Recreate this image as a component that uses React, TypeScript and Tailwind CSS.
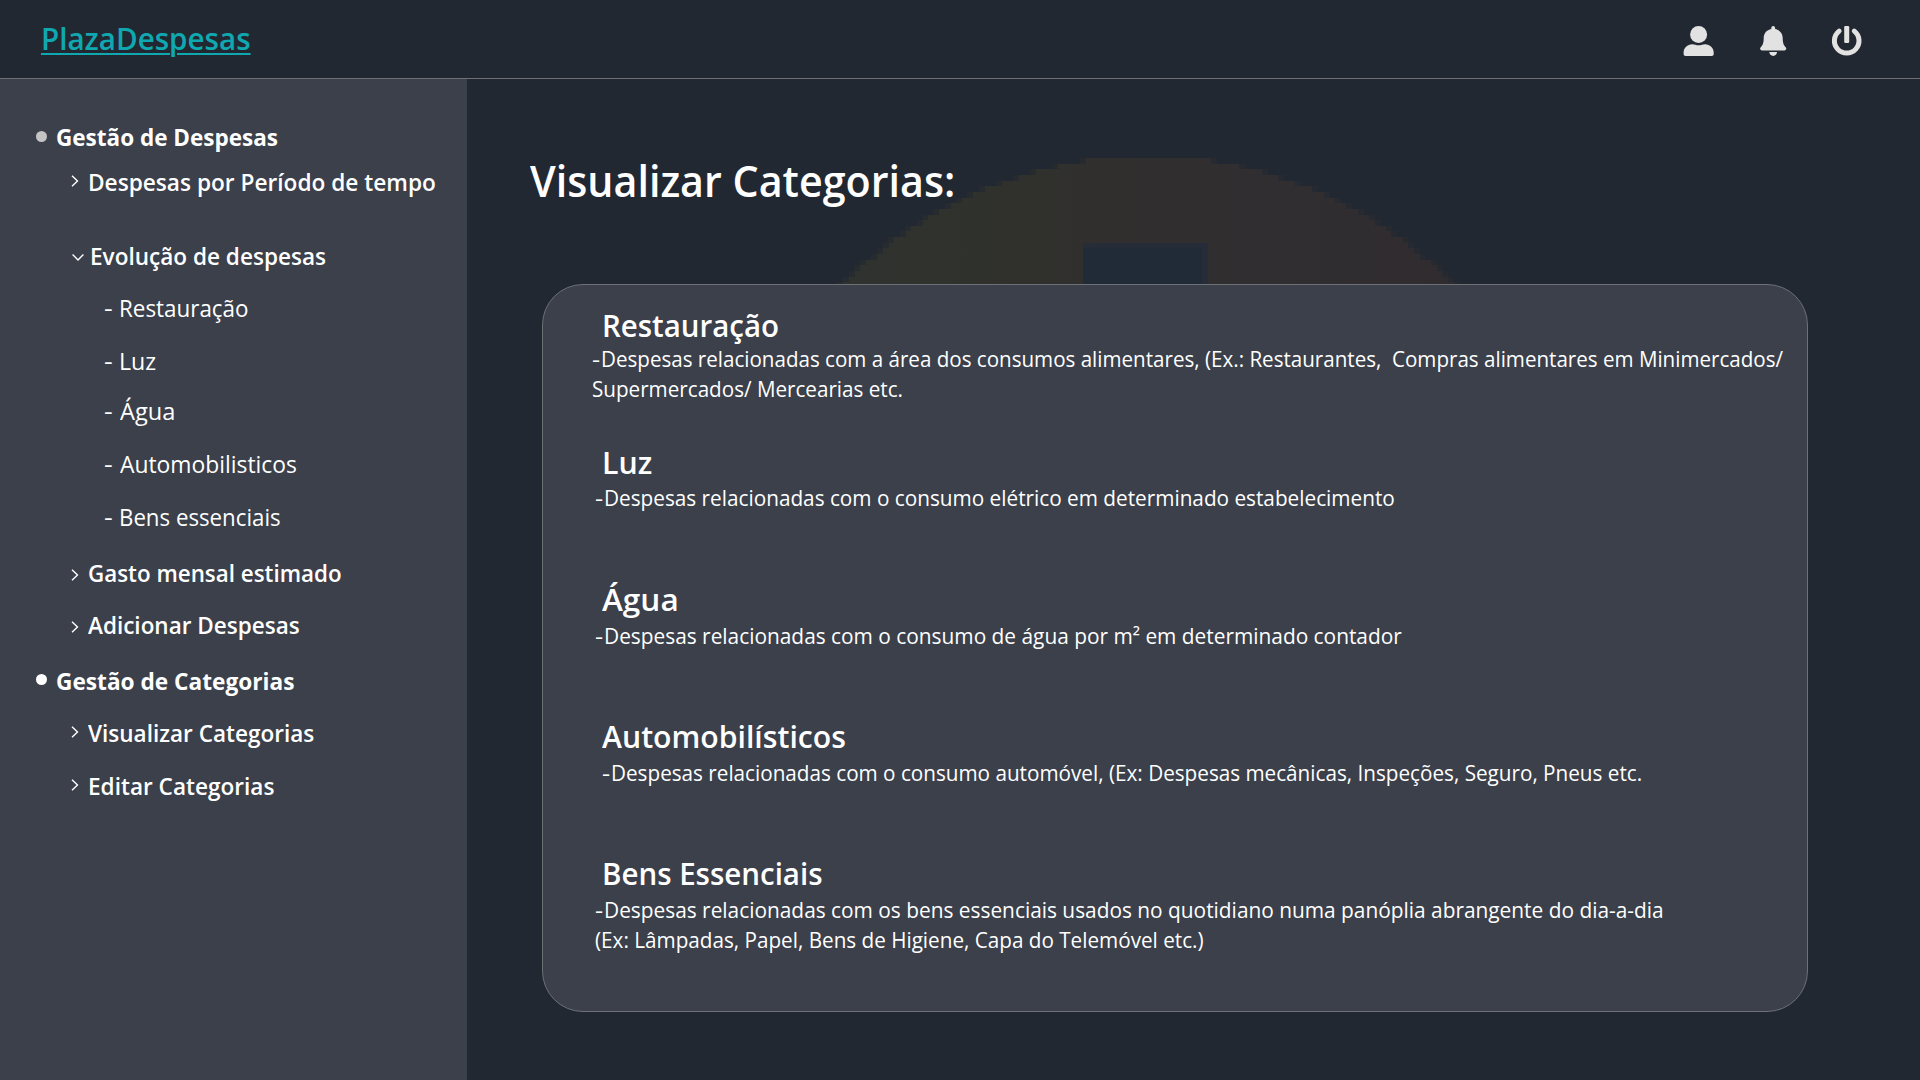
import type { ReactNode } from "react";

const CELL = 5.65;

function Backdrop() {
  const rows = [];
  for (let i = 0; i * CELL < 126; i++) {
    const y = i * CELL;
    const depth = y + 2 + CELL / 2;
    const half = Math.sqrt(2 * 428 * depth - depth * depth);
    const snapped = Math.floor(half / CELL) * CELL;
    rows.push({ y, half: snapped, h: Math.min(CELL, 126 - y) });
  }
  return (
    <svg
      className="absolute left-[362px] top-[79px] h-[126px] w-[640px]"
      viewBox="0 0 640 126"
      aria-hidden="true"
    >
      <defs>
        <linearGradient id="dome" gradientUnits="userSpaceOnUse" x1="10" y1="0" x2="630" y2="0">
          <stop offset="0" stopColor="#2f322e" />
          <stop offset="0.28" stopColor="#30312d" />
          <stop offset="0.42" stopColor="#302f2e" />
          <stop offset="0.72" stopColor="#302e30" />
          <stop offset="1" stopColor="#302b2f" />
        </linearGradient>
      </defs>
      <g shapeRendering="crispEdges">
        {rows.map((r) => (
          <g key={r.y} fill="url(#dome)">
            <rect x={319.5 - r.half} y={r.y} width={r.half * 2} height={r.h + 0.4} />
            <rect x={319.5 - r.half - 6} y={r.y} width={6} height={r.h + 0.4} opacity={0.35} />
            <rect x={319.5 + r.half} y={r.y} width={6} height={r.h + 0.4} opacity={0.35} />
          </g>
        ))}
        <rect x={254} y={85} width={125} height={41} fill="#262c38" />
        <rect x={254} y={90} width={119} height={36} fill="#212b37" />
      </g>
    </svg>
  );
}

function ChevronRight({ className }: { className: string }) {
  return (
    <svg className={`h-3 w-2 shrink-0 ${className}`} viewBox="0 0 8 12" fill="none" stroke="#fff" strokeWidth="1.4">
      <path d="M1 0.7 L6.5 6 L1 11.3" />
    </svg>
  );
}

function ChevronDown({ className }: { className: string }) {
  return (
    <svg className={`h-[7px] w-3 shrink-0 ${className}`} viewBox="0 0 12 7" fill="none" stroke="#fff" strokeWidth="1.4">
      <path d="M0.6 0.6 L6 6 L11.4 0.6" />
    </svg>
  );
}

type RowProps = { row: string; text: string; icon?: ReactNode; children: string };

function Row({ row, text, icon, children }: RowProps) {
  return (
    <li className={`flex h-8 items-center text-[23.5px] leading-8 ${row}`}>
      {icon}
      <span className={`origin-left ${text}`}>{children}</span>
    </li>
  );
}

function SubRow({ row, text, children }: RowProps) {
  return (
    <li className={`flex h-8 items-center pl-[103.5px] text-[23.5px] leading-8 ${row}`}>
      <span className="w-[15px] origin-left scale-x-[1.15]">-</span>
      <span className={`origin-left ${text}`}>{children}</span>
    </li>
  );
}

function Sidebar() {
  return (
    <aside className="w-[467px] shrink-0 bg-[#3b404b] pt-[42px]">
      <ul>
        <Row
          row="pl-[35.5px] font-bold"
          text="ml-[9px] scale-x-[0.958]"
          icon={<span className="-mt-[2px] size-[11px] rounded-full bg-[#c4c4c4]" />}
        >
          Gestão de Despesas
        </Row>
        <Row row="mt-[13px] pl-[71px] font-semibold" text="ml-[8.5px] scale-x-[0.964]" icon={<ChevronRight className="-mt-[2px]" />}>
          Despesas por Período de tempo
        </Row>
        <Row row="mt-[42px] pl-[71.5px] font-semibold" text="ml-[6.5px] scale-x-[0.96]" icon={<ChevronDown className="mt-[3px]" />}>
          Evolução de despesas
        </Row>
        <SubRow row="mt-5" text="ml-[0.5px] scale-x-[0.953]">Restauração</SubRow>
        <SubRow row="mt-[21px]" text="ml-[0.5px] scale-x-[0.985]">Luz</SubRow>
        <SubRow row="mt-[18px]" text="ml-[1px] scale-x-[1.005]">Água</SubRow>
        <SubRow row="mt-[21px]" text="ml-[1px] scale-x-[0.9722]">Automobilisticos</SubRow>
        <SubRow row="mt-[21px]" text="ml-[0.5px] scale-x-[0.947]">Bens essenciais</SubRow>
        <Row row="mt-6 pl-[71px] font-semibold" text="ml-[8.5px] scale-x-[0.952]" icon={<ChevronRight className="mt-[4px]" />}>
          Gasto mensal estimado
        </Row>
        <Row row="mt-5 pl-[71px] font-semibold" text="ml-[9px] scale-x-[0.958]" icon={<ChevronRight className="mt-[4px]" />}>
          Adicionar Despesas
        </Row>
        <Row
          row="mt-6 pl-[35.5px] font-bold"
          text="ml-[9px] scale-x-[0.964]"
          icon={<span className="-mt-[3px] size-[11px] rounded-full bg-white" />}
        >
          Gestão de Categorias
        </Row>
        <Row row="mt-5 pl-[71px] font-semibold" text="ml-[9px] scale-x-[0.9591]" icon={<ChevronRight className="-mt-[2px]" />}>
          Visualizar Categorias
        </Row>
        <Row row="mt-[21px] pl-[71px] font-semibold" text="ml-[8.5px] scale-x-[0.961]" icon={<ChevronRight className="-mt-[2px]" />}>
          Editar Categorias
        </Row>
      </ul>
    </aside>
  );
}

type Line = { text: string; scale: string; dash?: boolean };
type Category = { title: string; titleClass: string; descClass: string; lines: Line[] };

const categories: Category[] = [
  {
    title: "Restauração",
    titleClass: "ml-[0.7px] scale-x-[0.938]",
    descClass: "ml-[49px] -mt-[4px]",
    lines: [
      {
        dash: true,
        text: "Despesas relacionadas com a área dos consumos alimentares, (Ex.: Restaurantes,  Compras alimentares em Minimercados/",
        scale: "scale-x-[0.9354]",
      },
      { text: "Supermercados/ Mercearias etc.", scale: "scale-x-[0.938]" },
    ],
  },
  {
    title: "Luz",
    titleClass: "ml-[0.7px] scale-x-[0.965]",
    descClass: "ml-[52px] -mt-[2px]",
    lines: [
      {
        dash: true,
        text: "Despesas relacionadas com o consumo elétrico em determinado estabelecimento",
        scale: "scale-x-[0.943]",
      },
    ],
  },
  {
    title: "Água",
    titleClass: "ml-[1px] scale-x-[1.005]",
    descClass: "ml-[52px] -mt-[1px]",
    lines: [
      {
        dash: true,
        text: "Despesas relacionadas com o consumo de água por m² em determinado contador",
        scale: "scale-x-[0.9478]",
      },
    ],
  },
  {
    title: "Automobilísticos",
    titleClass: "ml-[1px] scale-x-[0.9617]",
    descClass: "ml-[59px] -mt-[1px]",
    lines: [
      {
        dash: true,
        text: "Despesas relacionadas com o consumo automóvel, (Ex: Despesas mecânicas, Inspeções, Seguro, Pneus etc.",
        scale: "scale-x-[0.9401]",
      },
    ],
  },
  {
    title: "Bens Essenciais",
    titleClass: "ml-[0.7px] scale-x-[0.939]",
    descClass: "ml-[52px] -mt-[1px]",
    lines: [
      {
        dash: true,
        text: "Despesas relacionadas com os bens essenciais usados no quotidiano numa panóplia abrangente do dia-a-dia",
        scale: "scale-x-[0.9478]",
      },
      { text: "(Ex: Lâmpadas, Papel, Bens de Higiene, Capa do Telemóvel etc.)", scale: "scale-x-[0.94]" },
    ],
  },
];

function CategorySection({ title, titleClass, descClass, lines }: Category) {
  return (
    <section className="flow-root h-[137px]">
      <h2 className="flex h-11 pl-[58px] text-[31.4px] font-semibold leading-[44px]">
        <span className={`origin-left ${titleClass}`}>{title}</span>
      </h2>
      <div className={`text-[22px] leading-[30px] ${descClass}`}>
        {lines.map((l) => (
          <p key={l.text} className="flex h-[30px] whitespace-pre">
            {l.dash && <span className="w-[8.5px] shrink-0 origin-left scale-x-[1.15]">-</span>}
            <span className={`shrink-0 origin-left ${l.scale}`}>{l.text}</span>
          </p>
        ))}
      </div>
    </section>
  );
}

function Header() {
  return (
    <header className="flex h-[79px] shrink-0 items-start justify-between border-b border-[#6f7073] pl-[41px] pr-[58px]">
      <a className="mt-[16px] origin-left scale-x-[0.943] text-[31.4px] font-semibold leading-[44px] text-[#10a8b0] underline decoration-[2px] underline-offset-[3px]">
        PlazaDespesas
      </a>
      <div className="mt-[26px] flex text-[#e2e2e2]">
        <svg className="h-[30px] w-[31px]" viewBox="0 0 31 30" fill="currentColor">
          <circle cx="15.6" cy="8.5" r="8.5" />
          <path d="M9.300 18.200c1.200 0 2 .2 3 .6 2.100.7 4.600.7 6.700 0 1-.4 1.800-.6 3-.6 5 0 8.700 3.700 8.700 8.300v1.500c0 1.200-.8 2-2 2H2.600c-1.200 0-2-.8-2-2v-1.500c0-4.600 3.700-8.300 8.700-8.300z" />
        </svg>
        <svg className="ml-[46px] h-[30px] w-[27px]" viewBox="0 0 27 30" fill="currentColor">
          <path d="M13.200 0c1.100 0 1.900.8 1.900 1.900v1c4.600.9 7.600 4.400 7.600 9.100 0 5.500 1.200 7.400 3 9.200.4.500.6.900.6 1.400 0 1.100-.8 1.800-1.900 1.800H2c-1.100 0-1.900-.7-1.900-1.800 0-.5.200-.9.600-1.400 1.800-1.800 3-3.700 3-9.200 0-4.700 3-8.200 7.600-9.100v-1c0-1.100.8-1.900 1.900-1.900z" />
          <path d="M9.300 26h7.700c0 2.200-1.700 3.900-3.800 3.900s-3.900-1.700-3.900-3.900z" />
        </svg>
        <svg className="ml-[44px] h-[31px] w-[31px]" viewBox="0 0 31 31" fill="none" stroke="currentColor">
          <path d="M8.100 5.100a12.300 12.300 0 1 0 15.200 0" strokeWidth="5" strokeLinecap="round" />
          <rect x="13.200" y="0" width="5" height="17" rx="1.200" fill="currentColor" stroke="none" />
        </svg>
      </div>
    </header>
  );
}

export default function App() {
  return (
    <div className="flex h-[1080px] w-[1920px] flex-col overflow-hidden bg-[#222831] font-['Open_Sans',sans-serif] text-white">
      <Header />
      <div className="flex flex-1">
        <Sidebar />
        <main className="relative flex-1">
          <Backdrop />
          <h1 className="relative mt-[72px] flex h-[60px] pl-[62.5px] text-[43.25px] font-semibold leading-[60px]">
            <span className="origin-left scale-x-[0.9535]">Visualizar Categorias:</span>
          </h1>
          <div className="relative ml-[75px] mt-[73px] h-[728px] w-[1266px] rounded-[41px] border border-[#6d7075] bg-[#3b404b] pt-[18px]">
            {categories.map((c) => (
              <CategorySection key={c.title} {...c} />
            ))}
          </div>
        </main>
      </div>
    </div>
  );
}
